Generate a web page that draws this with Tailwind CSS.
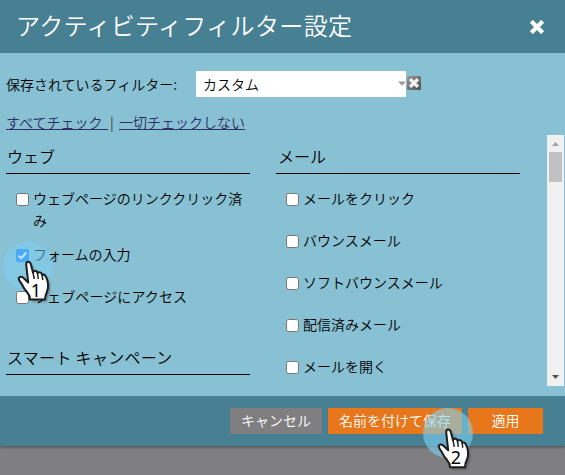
<!DOCTYPE html>
<html lang="ja">
<head>
<meta charset="utf-8">
<title>アクティビティフィルター設定</title>
<script src="https://cdn.jsdelivr.net/npm/@tailwindcss/browser@4"></script>
</head>
<body class="relative h-[475px] w-[565px] overflow-hidden bg-[#7f7f81] font-['Noto_Sans_CJK_JP',sans-serif] text-[14px] leading-[22px] font-[350] text-black">
<div class="flex h-[446px] flex-col bg-[#88c1d3] shadow-[0_1px_3px_rgba(0,0,0,0.4)]">
  <header class="flex h-[53px] shrink-0 items-center justify-between bg-[#468092] pr-[21px] pl-4 text-white">
    <h1 class="h-[53px] text-[24px] leading-[50px] font-[350] tracking-[0.35px] whitespace-nowrap">アクティビティフィルター設定</h1>
    <svg class="mt-px size-[14px]" viewBox="0 0 14 14"><path d="M2.8 2.8 11.2 11.2M11.2 2.8 2.8 11.2" stroke="#fff" stroke-width="4.2" stroke-linecap="square"/></svg>
  </header>
  <div class="mt-[18px] flex h-[26px] shrink-0 items-center pl-[6px]">
    <span class="w-[190px] pb-px whitespace-nowrap">保存されているフィルター:</span>
    <div class="flex h-[26px] w-[210px] items-center justify-between bg-white pl-[7px]">
      <span class="pb-px">カスタム</span>
      <svg class="mb-[2px] h-[5px] w-[8px]" viewBox="0 0 8 5"><path d="M0 .5h8L4 4.7z" fill="#999"/></svg>
    </div>
    <svg class="mb-[2px] ml-px size-[14px]" viewBox="0 0 14 14"><defs><linearGradient id="g" x2="1" y2="1"><stop stop-color="#999"/><stop offset="1" stop-color="#505050"/></linearGradient></defs><rect width="14" height="14" rx="1.2" fill="url(#g)"/><path d="M4.300 4.300 9.700 9.700M9.700 4.300 4.300 9.700" stroke="#f3f3f3" stroke-width="3.300" stroke-linecap="square"/></svg>
  </div>
  <div class="mt-[14px] flex h-[23px] shrink-0 pl-[6px] whitespace-pre text-[#2e2f63]"><span class="h-[19px] w-[102px] border-b border-[#2e2f63]">すべてチェック</span><span class="w-[11px] pl-[2px] text-[#333]">|</span><span class="h-[19px] border-b border-[#2e2f63]">一切チェックしない</span></div>
  <main class="mt-px flex h-[251px] shrink-0 pl-[6px]">
    <section class="w-[244px]">
      <h2 class="h-[39px] border-b border-black pt-[10px] pl-px text-[16px] leading-[22px] font-[350]">ウェブ</h2>
      <div class="mt-[13px] flex pl-[10px]"><i class="mt-[6px] mr-1 size-[13px] shrink-0 rounded-[2.5px] border border-[#767676] bg-white"></i><span class="w-[212px]">ウェブページのリンククリック済み</span></div>
      <div class="mt-[12px] flex pl-[10px]"><i class="mt-[6px] mr-1 size-[13px] shrink-0 rounded-[2px] bg-[#1a80ff]"><svg viewBox="0 0 13 13"><path d="M2.7 6.8 5.2 9.3 10.3 3.3" fill="none" stroke="#fff" stroke-width="2"/></svg></i><span>フォームの入力</span></div>
      <div class="mt-[20px] flex pl-[10px]"><i class="mt-[6px] mr-1 size-[13px] shrink-0 rounded-[2.5px] border border-[#767676] bg-white"></i><span class="tracking-[0.1px]">ウェブページにアクセス</span></div>
      <h2 class="mt-[29px] h-[39px] border-b border-black pt-[10px] pl-px text-[16px] leading-[22px] font-[350] tracking-[0.3px]">スマート キャンペーン</h2>
    </section>
    <section class="ml-[26px] w-[244px]">
      <h2 class="h-[39px] border-b border-black pt-[10px] pl-[2px] text-[16px] leading-[22px] font-[350]">メール</h2>
      <div class="mt-[13px] flex flex-col gap-[20px] pl-[10px]">
        <div class="flex"><i class="mt-[6px] mr-1 size-[13px] rounded-[2.5px] border border-[#767676] bg-white"></i><span>メールをクリック</span></div>
        <div class="flex"><i class="mt-[6px] mr-1 size-[13px] rounded-[2.5px] border border-[#767676] bg-white"></i><span>バウンスメール</span></div>
        <div class="flex"><i class="mt-[6px] mr-1 size-[13px] rounded-[2.5px] border border-[#767676] bg-white"></i><span>ソフトバウンスメール</span></div>
        <div class="flex"><i class="mt-[6px] mr-1 size-[13px] rounded-[2.5px] border border-[#767676] bg-white"></i><span>配信済みメール</span></div>
        <div class="flex"><i class="mt-[6px] mr-1 size-[13px] rounded-[2.5px] border border-[#767676] bg-white"></i><span>メールを開く</span></div>
      </div>
    </section>
    <div class="ml-[27px] flex w-[17px] flex-col items-center bg-[#f1f1f1]">
      <svg class="size-[17px]" viewBox="0 0 17 17"><path d="M5 11h7L8.500 7z" fill="#a3a3a3"/></svg>
      <div class="h-[30px] w-[13px] bg-[#c1c1c1]"></div>
      <svg class="mt-auto size-[17px]" viewBox="0 0 17 17"><path d="M5 6h7L8.500 10z" fill="#505050"/></svg>
    </div>
  </main>
  <footer class="mt-auto flex h-[50px] shrink-0 items-center justify-end gap-[6px] bg-[#468092] pr-[22px] text-white">
    <button class="h-[26px] w-[92px] bg-[#7f7f81] pb-[2px] leading-[24px]">キャンセル</button>
    <button class="h-[26px] w-[134px] bg-[#e8771b] pb-[2px] leading-[24px]">名前を付けて保存</button>
    <button class="h-[26px] w-[75px] bg-[#e8771b] pb-[2px] leading-[24px]">適用</button>
  </footer>
</div>

<svg class="absolute top-[241px] left-[3px] h-[70px] w-[60px] overflow-visible" viewBox="0 0 60 70">
  <defs>
    <path id="hand" d="M23.300 24.500Q22.800 21 25 20.700Q27.300 20.500 27.900 23.500L30 31.500Q31 29.300 33 30Q34.300 30.500 34.500 32Q36 30.600 37.700 31.600Q39 32.300 39.200 34Q41.300 32.900 42.700 35.300Q44.400 38.300 45 42.500Q45.600 47 43.700 51.500Q42.200 54 42 58.500H27Q27.200 55 24.300 51.500Q21 48 18.700 43Q15.700 39.300 15.700 37.200Q17 34.600 20 36.500L25.200 41.500Z"/>
  </defs>
  <circle cx="25" cy="25" r="25" fill="#7dd2f4" fill-opacity=".5"/>
  <use href="#hand" fill="#333" fill-opacity=".5" transform="translate(2 2)" class="blur-[1px]"/>
  <use href="#hand" fill="#fff" stroke="#1d1d1d" stroke-width="2" stroke-linejoin="round"/>
  <path d="M30 31.500 31.300 38M34.500 32 35.300 38M39.200 34 39.700 39" stroke="#222" stroke-width="1.500"/>
  <text x="32.800" y="55.500" text-anchor="middle" font-family="Noto Sans" font-size="18" font-weight="400">1</text>
</svg>
<svg class="absolute top-[408px] left-[423px] h-[67px] w-[60px] overflow-visible" viewBox="0 0 60 67">
  <circle cx="25" cy="25" r="25" fill="#7dd2f4" fill-opacity=".6"/>
  <use href="#hand" fill="#333" fill-opacity=".5" transform="translate(2 3)" class="blur-[1px]"/>
  <g transform="translate(0 .8)">
  <use href="#hand" fill="#fff" stroke="#1d1d1d" stroke-width="2" stroke-linejoin="round"/>
  <path d="M30 31.500 31.300 38M34.500 32 35.300 38M39.200 34 39.700 39" stroke="#222" stroke-width="1.500"/>
  <text x="32.800" y="55.500" text-anchor="middle" font-family="Noto Sans" font-size="18" font-weight="400">2</text>
  </g>
</svg>
</body>
</html>
